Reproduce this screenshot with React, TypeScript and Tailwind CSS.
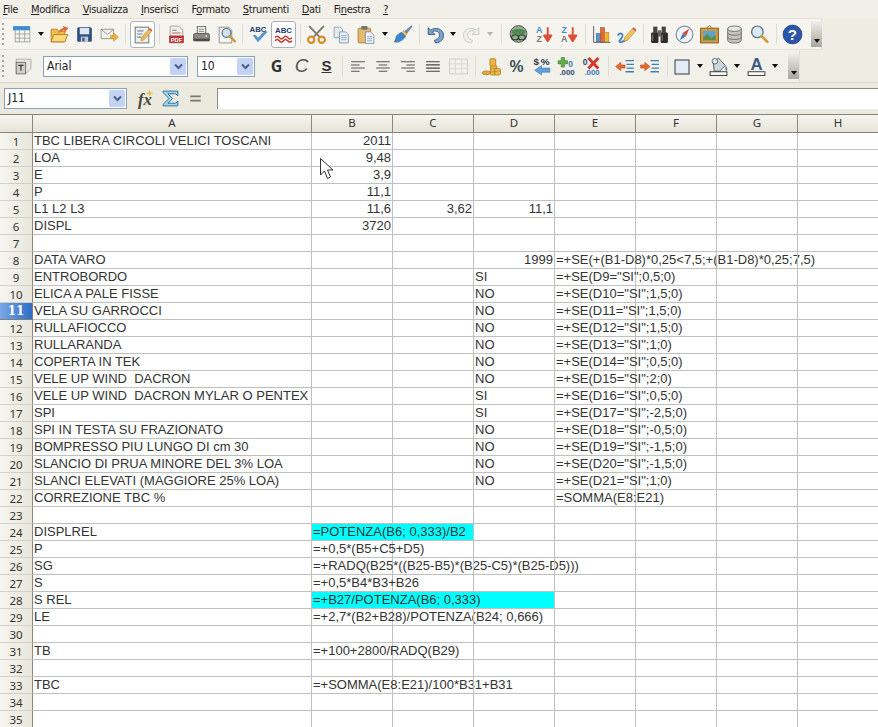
import { ReactNode } from "react";

type IconProps = { children: ReactNode };

// 20x20 canvas for all toolbar drawings
function Ico({ children }: IconProps) {
  return (
    <svg width="21" height="21" viewBox="0 0 20 20" className="block">
      {children}
    </svg>
  );
}

function Btn({ className = "w-[25px]", children }: { className?: string; children: ReactNode }) {
  return <div className={`${className} shrink-0 flex items-center justify-center`}>{children}</div>;
}

function Sep({ className }: { className: string }) {
  return (
    <div className={`${className} shrink-0 flex items-center justify-center`}>
      <div className="w-px h-[20px] bg-[#dedcd2]" />
    </div>
  );
}

function Drop({ className, grey }: { className: string; grey?: boolean }) {
  return (
    <div className={`${className} shrink-0 flex items-center justify-center`}>
      <div
        className={`w-0 h-0 border-x-[3.5px] border-x-transparent border-t-[4px] ${grey ? "border-t-[#b5b5b0]" : "border-t-[#111]"}`}
      />
    </div>
  );
}

function Grip() {
  return (
    <div className="w-[9.5px] shrink-0 flex flex-col gap-[3px] items-start pl-[2px]">
      {[0, 1, 2, 3, 4].map((i) => (
        <div key={i} className="w-[2px] h-[2px] bg-[#a8a69a]" />
      ))}
    </div>
  );
}

function More() {
  return (
    <div className="w-[11px] h-[26px] shrink-0 bg-gradient-to-b from-[#efeee8] to-[#a9a89f] flex items-end justify-center pb-[4px]">
      <div className="w-0 h-0 border-x-[3.5px] border-x-transparent border-t-[4px] border-t-[#111]" />
    </div>
  );
}

function Combo({ className, label }: { className: string; label: string }) {
  return (
    <div className={`${className} h-[21px] shrink-0 bg-white border border-[#8ba0bc] flex items-center justify-between pl-[3px] pr-[1px]`}>
      <span className="text-[12px] text-[#222] font-['DejaVu_Sans',sans-serif] font-stretch-condensed leading-none">{label}</span>
      <div className="w-[16px] h-[17px] rounded-[2px] bg-[#c4d3f3] flex items-center justify-center">
        <svg width="9" height="7" viewBox="0 0 9 7">
          <path d="M1 1.5 L4.5 5 L8 1.5" fill="none" stroke="#4a5f8c" strokeWidth="2" />
        </svg>
      </div>
    </div>
  );
}

const icons = {
  table: (
    <Ico>
      <rect x="3" y="3" width="14" height="14" fill="#f4f4f0" stroke="#9a9a94" strokeWidth="0.8" />
      <rect x="1" y="2" width="16" height="4" fill="#3f8ed0" />
      <path d="M7 6V17M12 6V17M3 9.5H17M3 13.5H17" stroke="#a0a09a" strokeWidth="0.8" />
    </Ico>
  ),
  folder: (
    <Ico>
      <path d="M2 5H8L9 7H15V17H2Z" fill="#f2bc4a" stroke="#b9832a" strokeWidth="0.9" />
      <path d="M2 17L4.5 10H18L15 17Z" fill="#fbd77c" stroke="#b9832a" strokeWidth="0.9" />
      <path d="M9 9C10 5 12 4 14 4L13 2L18.5 3.5L15 8L14.6 6C13 6 11 7 9 9Z" fill="#e8622c" />
    </Ico>
  ),
  save: (
    <Ico>
      <rect x="3" y="3" width="14" height="14" rx="1.5" fill="#2f4f7f" />
      <rect x="5.5" y="3.8" width="9" height="6" fill="#dfe6ef" />
      <rect x="6.5" y="12" width="7" height="5" fill="#c4ccd6" />
      <rect x="8" y="13" width="2" height="3.5" fill="#2f4f7f" />
    </Ico>
  ),
  mail: (
    <Ico>
      <rect x="2" y="5" width="12" height="9" fill="#f2f2ee" stroke="#8e8e88" strokeWidth="0.8" />
      <path d="M2 5L8 10L14 5" fill="none" stroke="#8e8e88" strokeWidth="0.8" />
      <path d="M11 11H14V8.5L18.5 12.5L14 16.5V14H11Z" fill="#efb23e" stroke="#b9832a" strokeWidth="0.5" />
    </Ico>
  ),
  edit: (
    <Ico>
      <rect x="3" y="3" width="13" height="15" fill="#eef0ee" stroke="#6d6d68" strokeWidth="0.9" />
      <path d="M5 6.5H11M5 9.5H10M5 12.5H9" stroke="#6c8aa8" strokeWidth="1.1" />
      <path d="M9 13L16 5L18.5 7L11.5 15L8.5 16Z" fill="#eebc50" stroke="#a8762a" strokeWidth="0.5" />
      <path d="M16 5L17 3.8L19.5 5.8L18.5 7Z" fill="#d8554a" />
    </Ico>
  ),
  pdf: (
    <Ico>
      <path d="M4 2H12L16 6V18H4Z" fill="#eeeeea" stroke="#9a9a94" strokeWidth="0.8" />
      <path d="M6 6H10M6 8.5H14" stroke="#b07070" strokeWidth="1" />
      <rect x="3" y="11" width="14" height="7" fill="#bb3333" />
      <text x="10" y="16.8" textAnchor="middle" fontSize="5.5" fontWeight="700" fill="#fff" fontFamily="Liberation Sans">PDF</text>
    </Ico>
  ),
  print: (
    <Ico>
      <rect x="6" y="2.5" width="8" height="7" fill="#f4f4f0" stroke="#66665f" strokeWidth="0.9" />
      <path d="M7.5 5H12.5M7.5 7H12.5" stroke="#77776f" strokeWidth="0.8" />
      <path d="M2.5 10.5Q2.5 9 4 9H16Q17.5 9 17.5 10.5V15.5H2.5Z" fill="#8a8a84" stroke="#4c4c47" strokeWidth="0.8" />
      <rect x="2.5" y="14" width="15" height="2.5" fill="#4c4c47" />
      <circle cx="14.5" cy="11.5" r="0.8" fill="#dfe7d0" />
    </Ico>
  ),
  preview: (
    <Ico>
      <path d="M3 3H12L15 6V18H3Z" fill="#f6f6f2" stroke="#84847e" strokeWidth="0.8" />
      <circle cx="10" cy="8.5" r="4.2" fill="#cfe3f2" stroke="#5c6c7c" strokeWidth="1.1" />
      <path d="M13 11.5L18 16.5" stroke="#c99a3c" strokeWidth="2.2" strokeLinecap="round" />
    </Ico>
  ),
  abcCheck: (
    <Ico>
      <text x="9.5" y="8" textAnchor="middle" fontSize="7.5" fontWeight="700" fill="#26406e" fontFamily="Liberation Sans">ABC</text>
      <path d="M5 11L9.5 17L18 7.5L16 7L9.5 13.5L7 10.5Z" fill="#4f9bd8" stroke="#2d6aa5" strokeWidth="0.4" />
    </Ico>
  ),
  abcWave: (
    <Ico>
      <text x="10" y="9" textAnchor="middle" fontSize="7.5" fontWeight="700" fill="#26406e" fontFamily="Liberation Sans">ABC</text>
      <path d="M2 13Q4 10.5 6 13T10 13T14 13T18 13" fill="none" stroke="#cc2b2b" strokeWidth="1.4" />
      <path d="M2 16Q4 13.5 6 16T10 16T14 16T18 16" fill="none" stroke="#cc2b2b" strokeWidth="1.4" />
    </Ico>
  ),
  scissors: (
    <Ico>
      <path d="M3 2L13 12.5M17 2L7 12.5" stroke="#7a7a74" strokeWidth="1.8" />
      <circle cx="5" cy="15" r="3" fill="none" stroke="#d98a26" strokeWidth="2" />
      <circle cx="15" cy="15" r="3" fill="none" stroke="#d98a26" strokeWidth="2" />
    </Ico>
  ),
  copy: (
    <Ico>
      <path d="M3 3H9L11 5V13H3Z" fill="#e6ecf4" stroke="#8a96a8" strokeWidth="0.8" />
      <path d="M8 7.5H14L16.5 10V18H8Z" fill="#eef3f8" stroke="#7d8ca0" strokeWidth="0.8" />
      <path d="M9.5 11H15M9.5 13H15M9.5 15H15" stroke="#7ba0c4" strokeWidth="0.8" />
    </Ico>
  ),
  paste: (
    <Ico>
      <rect x="2" y="4" width="12" height="14" rx="1" fill="#e7b96a" stroke="#a77c34" strokeWidth="0.8" />
      <rect x="5" y="2" width="6" height="3.5" rx="1" fill="#77776f" />
      <path d="M9 7.5H14L17 10.5V18.5H9Z" fill="#f2f6fa" stroke="#7d8ca0" strokeWidth="0.8" />
      <path d="M10.5 12H15.5M10.5 14H15.5M10.5 16H15.5" stroke="#7ba0c4" strokeWidth="0.8" />
    </Ico>
  ),
  brush: (
    <Ico>
      <path d="M19 1.5L12 7L14 9L18.5 3Z" fill="#6f93bb" stroke="#44607f" strokeWidth="0.5" />
      <path d="M11.5 6.5L14.5 9.5L12 11.5L9 8.5Z" fill="#e6c25a" stroke="#a5842c" strokeWidth="0.5" />
      <path d="M9 8L13 12C10 16 6 18 2 17C3.5 15.5 4 13 4 12C5 10 7 9 9 8Z" fill="#3f86d0" stroke="#28598f" strokeWidth="0.6" />
    </Ico>
  ),
  undo: (
    <Ico>
      <path d="M3 3.5V10H9.5L7 7.5C9 6 12.5 6.5 13.5 9C14.5 12 12.5 15 9 15.5L10 18C15 18 18.5 14 17.5 9.5C16.5 4.5 10 2.5 5.5 5.8Z" fill="#7ea3cc" stroke="#3d5d85" strokeWidth="0.9" />
    </Ico>
  ),
  redo: (
    <Ico>
      <path d="M17 3.5V10H10.5L13 7.5C11 6 7.5 6.5 6.5 9C5.5 12 7.5 15 11 15.5L10 18C5 18 1.5 14 2.5 9.5C3.5 4.5 10 2.5 14.5 5.8Z" fill="#f0f0ec" stroke="#c9c9c3" strokeWidth="0.9" />
    </Ico>
  ),
  nav: (
    <Ico>
      <circle cx="10" cy="9.5" r="8" fill="#8fb28c" stroke="#555" strokeWidth="0.9" />
      <path d="M3 7C6 4 13 3.5 17 7L15 10H5Z" fill="#4e8a50" />
      <rect x="3.5" y="10.5" width="6.5" height="4.5" rx="2.2" fill="none" stroke="#333" strokeWidth="1.1" />
      <rect x="10" y="10.5" width="6.5" height="4.5" rx="2.2" fill="none" stroke="#333" strokeWidth="1.1" />
    </Ico>
  ),
  az: (
    <Ico>
      <text x="6" y="8.5" textAnchor="middle" fontSize="8.5" fontWeight="700" fill="#3d8ccf" fontFamily="Liberation Sans">A</text>
      <text x="6" y="17.5" textAnchor="middle" fontSize="8.5" fontWeight="700" fill="#777" fontFamily="Liberation Sans">Z</text>
      <path d="M14 3V13M10.5 11L14 16.5L17.5 11Z" fill="#dd4d33" stroke="#dd4d33" strokeWidth="1.8" strokeLinejoin="round" />
    </Ico>
  ),
  za: (
    <Ico>
      <text x="6" y="8.5" textAnchor="middle" fontSize="8.5" fontWeight="700" fill="#3d8ccf" fontFamily="Liberation Sans">Z</text>
      <text x="6" y="17.5" textAnchor="middle" fontSize="8.5" fontWeight="700" fill="#777" fontFamily="Liberation Sans">A</text>
      <path d="M14 3V13M10.5 11L14 16.5L17.5 11Z" fill="#dd4d33" stroke="#dd4d33" strokeWidth="1.8" strokeLinejoin="round" />
    </Ico>
  ),
  chart: (
    <Ico>
      <path d="M2.5 2V17.5H18.5" fill="none" stroke="#556" strokeWidth="0.9" />
      <rect x="5" y="9" width="4" height="8" fill="#5a93cc" stroke="#36628f" strokeWidth="0.5" />
      <rect x="9" y="3.5" width="4" height="13.5" fill="#e06a3a" stroke="#a8481f" strokeWidth="0.5" />
      <rect x="13" y="8" width="4" height="9" fill="#f0b53e" stroke="#b27f1c" strokeWidth="0.5" />
    </Ico>
  ),
  draw: (
    <Ico>
      <path d="M1.5 11C4 8 7 8.5 6 12C5 15 2 16 3.5 17C6 18 9 15.5 11 14" fill="none" stroke="#4a7fbf" strokeWidth="1.7" />
      <path d="M8 13L15.5 4.5L18.5 7L11 15.5L7.5 16.5Z" fill="#efc558" stroke="#a8762a" strokeWidth="0.5" />
      <path d="M15.5 4.5L16.7 3L19.5 5.5L18.5 7Z" fill="#d8554a" />
    </Ico>
  ),
  binoc: (
    <Ico>
      <rect x="2" y="8" width="7" height="10" rx="1.2" fill="#2c2c2a" />
      <rect x="11" y="8" width="7" height="10" rx="1.2" fill="#2c2c2a" />
      <rect x="4" y="2.5" width="4" height="6" fill="#44443f" />
      <rect x="12" y="2.5" width="4" height="6" fill="#44443f" />
      <rect x="8.5" y="6" width="3" height="6" fill="#66665f" />
      <path d="M3.5 10V16" stroke="#8a8a84" strokeWidth="0.9" />
      <path d="M12.5 10V16" stroke="#8a8a84" strokeWidth="0.9" />
    </Ico>
  ),
  compass: (
    <Ico>
      <circle cx="10" cy="10" r="8" fill="#f0f2f4" stroke="#7d8ca0" strokeWidth="1.1" />
      <path d="M14.5 4.5L8.5 8.5L11.5 11.5Z" fill="#d9432f" />
      <path d="M5.5 15.5L8.5 8.5L11.5 11.5Z" fill="#3f78c0" />
    </Ico>
  ),
  gallery: (
    <Ico>
      <path d="M7 4L10 1.5L13 4" fill="none" stroke="#8a6a2a" strokeWidth="0.8" />
      <rect x="1.5" y="4" width="17" height="14" fill="#d99a3c" stroke="#7f5a1c" strokeWidth="0.9" />
      <rect x="4" y="6.5" width="12" height="9" fill="#5ea2c9" />
      <path d="M4 15.5V12.5L8 9.5L12 13L16 11V15.5Z" fill="#5c8f45" />
    </Ico>
  ),
  db: (
    <Ico>
      <path d="M3.5 4.5V15.5C3.5 19 16.5 19 16.5 15.5V4.5Z" fill="#c4c4be" stroke="#72726c" strokeWidth="0.9" />
      <ellipse cx="10" cy="4.5" rx="6.5" ry="2.6" fill="#e6e6e0" stroke="#72726c" strokeWidth="0.9" />
      <path d="M3.5 8.5C3.5 11.5 16.5 11.5 16.5 8.5M3.5 12.5C3.5 15.5 16.5 15.5 16.5 12.5" fill="none" stroke="#72726c" strokeWidth="0.9" />
    </Ico>
  ),
  search: (
    <Ico>
      <circle cx="8" cy="7.5" r="5.5" fill="#d9e9f5" stroke="#66788a" strokeWidth="1.3" />
      <path d="M12 11.5L17.5 17" stroke="#cfa03e" strokeWidth="2.6" strokeLinecap="round" />
    </Ico>
  ),
  help: (
    <Ico>
      <circle cx="10" cy="10" r="9" fill="#2b55a8" stroke="#1d3a78" strokeWidth="0.7" />
      <text x="10" y="15.3" textAnchor="middle" fontSize="14.5" fontWeight="700" fill="#fff" fontFamily="Liberation Sans">?</text>
    </Ico>
  ),
  styles: (
    <Ico>
      <path d="M4 3H18V12L14 16H4Z" fill="#e9e9e3" stroke="#a3a39c" strokeWidth="0.8" />
      <rect x="4" y="6" width="9" height="11" fill="#cfcfc8" stroke="#66665f" strokeWidth="0.8" />
      <path d="M6 9H11M8.5 9V14" stroke="#333" strokeWidth="1.1" />
    </Ico>
  ),
  alignL: (
    <Ico>
      <path d="M3 5.5H16M3 8.5H11M3 11.5H16M3 14.5H11" stroke="#555" strokeWidth="1" />
    </Ico>
  ),
  alignC: (
    <Ico>
      <path d="M3 5.5H16M5.5 8.5H13.5M3 11.5H16M5.5 14.5H13.5" stroke="#555" strokeWidth="1" />
    </Ico>
  ),
  alignR: (
    <Ico>
      <path d="M3 5.5H16M8 8.5H16M3 11.5H16M8 14.5H16" stroke="#555" strokeWidth="1" />
    </Ico>
  ),
  alignJ: (
    <Ico>
      <path d="M3 5.5H16M3 8.5H16M3 11.5H16M3 14.5H16" stroke="#444" strokeWidth="1.1" />
    </Ico>
  ),
  merge: (
    <Ico>
      <rect x="1.5" y="3" width="17" height="14" fill="#f2f1ea" stroke="#cfcec6" strokeWidth="0.9" />
      <path d="M1.5 7.5H18.5M1.5 12H18.5M7 3V17M13 3V17" stroke="#d6d5cd" strokeWidth="0.8" />
    </Ico>
  ),
  coins: (
    <Ico>
      <ellipse cx="5" cy="16" rx="4" ry="1.8" fill="#e9a93a" stroke="#a8741c" strokeWidth="0.7" />
      <rect x="9" y="9" width="6" height="9" rx="1" fill="#eeb545" stroke="#a8741c" strokeWidth="0.7" />
      <rect x="13" y="12" width="5.5" height="6" rx="1" fill="#f2c052" stroke="#a8741c" strokeWidth="0.7" />
      <rect x="8.5" y="2.5" width="5.5" height="7" rx="1" fill="#eeb545" stroke="#a8741c" strokeWidth="0.7" />
      <path d="M9 12H15M9 15H15M13.5 14.5H18.5" stroke="#a8741c" strokeWidth="0.5" />
    </Ico>
  ),
  percent: (
    <Ico>
      <text x="10" y="15.5" textAnchor="middle" fontSize="15" fontWeight="700" fill="#3c4a58" fontFamily="Liberation Sans">%</text>
    </Ico>
  ),
  currency: (
    <Ico>
      <text x="5" y="8.5" textAnchor="middle" fontSize="9.5" fontWeight="700" fill="#2c3a48" fontFamily="Liberation Sans">$</text>
      <text x="13.5" y="8.5" textAnchor="middle" fontSize="9.5" fontWeight="700" fill="#2c3a48" fontFamily="Liberation Sans">%</text>
      <path d="M18 11.5H10V9L3.5 13.5L10 18V15.5H18Z" fill="#5fa0dc" stroke="#3570a8" strokeWidth="0.5" />
    </Ico>
  ),
  addDec: (
    <Ico>
      <path d="M5 1.5H8V4.5H11V7.5H8V10.5H5V7.5H2V4.5H5Z" fill="#62b04a" stroke="#3d7d2c" strokeWidth="0.6" />
      <text x="14" y="10" textAnchor="middle" fontSize="8" fontWeight="700" fill="#3f78c0" fontFamily="Liberation Sans">0</text>
      <text x="10.5" y="18" textAnchor="middle" fontSize="7.5" fontWeight="700" fill="#2f4a70" fontFamily="Liberation Sans">.000</text>
    </Ico>
  ),
  delDec: (
    <Ico>
      <text x="4" y="9" textAnchor="middle" fontSize="8" fontWeight="700" fill="#2f4a70" fontFamily="Liberation Sans">0</text>
      <text x="10.5" y="18" textAnchor="middle" fontSize="7.5" fontWeight="700" fill="#3f78c0" fontFamily="Liberation Sans">.000</text>
      <path d="M7 2L16.5 12M16.5 2L7 12" stroke="#d8352b" strokeWidth="2.8" />
    </Ico>
  ),
  indentL: (
    <Ico>
      <path d="M11 4.5H19M12 8H19M12 11.5H19M11 15H19" stroke="#3e7cb8" strokeWidth="1.2" />
      <path d="M10.5 8.5H6.5V6L1.5 10L6.5 14V11.5H10.5Z" fill="#e96a2f" stroke="#b3481a" strokeWidth="0.5" />
    </Ico>
  ),
  indentR: (
    <Ico>
      <path d="M11 4.5H19M12 8H19M12 11.5H19M11 15H19" stroke="#3e7cb8" strokeWidth="1.2" />
      <path d="M1.5 8.5H5.5V6L10.5 10L5.5 14V11.5H1.5Z" fill="#e96a2f" stroke="#b3481a" strokeWidth="0.5" />
    </Ico>
  ),
  border: (
    <Ico>
      <rect x="3" y="3.5" width="14" height="14" fill="#e3ebf6" stroke="#2f3a4c" strokeWidth="1" />
    </Ico>
  ),
  bg: (
    <Ico>
      <path d="M5 6L10 2L16.5 9L11 14.5H6Z" fill="#cfd7de" stroke="#4e5a66" strokeWidth="0.9" />
      <circle cx="6.5" cy="5" r="2.6" fill="#e8ecef" stroke="#4e5a66" strokeWidth="0.8" />
      <path d="M17 9C19 12 18.5 14 17.5 14S16 12 17 9Z" fill="#4a7fbf" />
      <rect x="2" y="15" width="16" height="3.5" fill="#fbfbf8" stroke="#333" strokeWidth="0.9" />
    </Ico>
  ),
  fontColor: (
    <Ico>
      <text x="10" y="13.5" textAnchor="middle" fontSize="16" fontWeight="700" fill="#3d5a7d" fontFamily="Liberation Sans">A</text>
      <rect x="2" y="15" width="16" height="3.5" fill="#fbfbf8" stroke="#333" strokeWidth="0.9" />
    </Ico>
  ),
  fx: (
    <Ico>
      <text x="9.5" y="16" textAnchor="middle" fontSize="16" fontStyle="italic" fontWeight="700" fill="#4a4a3c" fontFamily="Liberation Serif">fx</text>
      <path d="M14 1.5L15 4L17.5 5L15 6L14 8.5L13 6L10.5 5L13 4Z" fill="#e8c340" />
    </Ico>
  ),
  sigma: (
    <Ico>
      <path d="M3 3H17V7.5L15 5.5H7.5L12 10L7.5 14.5H15L17 12.5V17H3V15.5L8.5 10L3 4.5Z" fill="#a4d6ee" stroke="#22709c" strokeWidth="0.9" />
    </Ico>
  ),
  equal: (
    <Ico>
      <path d="M5 8H15M5 12H15" stroke="#77776f" strokeWidth="1.6" />
    </Ico>
  ),
};

const menu: [string, string, string][] = [
  ["", "F", "ile"],
  ["", "M", "odifica"],
  ["", "V", "isualizza"],
  ["", "I", "nserisci"],
  ["F", "o", "rmato"],
  ["", "S", "trumenti"],
  ["", "D", "ati"],
  ["Fi", "n", "estra"],
  ["", "?", ""],
];

type Row = { a?: string; b?: string; c?: string; d?: string; dr?: string; e?: string; span?: number };

const rows: Row[] = [
  { a: "TBC LIBERA CIRCOLI VELICI TOSCANI", b: "2011" },
  { a: "LOA", b: "9,48" },
  { a: "E", b: "3,9" },
  { a: "P", b: "11,1" },
  { a: "L1 L2 L3", b: "11,6", c: "3,62", dr: "11,1" },
  { a: "DISPL", b: "3720" },
  {},
  { a: "DATA VARO", dr: "1999", e: '=+SE(+(B1-D8)*0,25<7,5;+(B1-D8)*0,25;7,5)' },
  { a: "ENTROBORDO", d: "SI", e: '=+SE(D9="SI";0,5;0)' },
  { a: "ELICA A PALE FISSE", d: "NO", e: '=+SE(D10="SI";1,5;0)' },
  { a: "VELA SU GARROCCI", d: "NO", e: '=+SE(D11="SI";1,5;0)' },
  { a: "RULLAFIOCCO", d: "NO", e: '=+SE(D12="SI";1,5;0)' },
  { a: "RULLARANDA", d: "NO", e: '=+SE(D13="SI";1;0)' },
  { a: "COPERTA IN TEK", d: "NO", e: '=+SE(D14="SI";0,5;0)' },
  { a: "VELE UP WIND  DACRON", d: "NO", e: '=+SE(D15="SI";2;0)' },
  { a: "VELE UP WIND  DACRON MYLAR O PENTEX", d: "SI", e: '=+SE(D16="SI";0,5;0)' },
  { a: "SPI", d: "SI", e: '=+SE(D17="SI";-2,5;0)' },
  { a: "SPI IN TESTA SU FRAZIONATO", d: "NO", e: '=+SE(D18="SI";-0,5;0)' },
  { a: "BOMPRESSO PIU LUNGO DI cm 30", d: "NO", e: '=+SE(D19="SI";-1,5;0)' },
  { a: "SLANCIO DI PRUA MINORE DEL 3% LOA", d: "NO", e: '=+SE(D20="SI";-1,5;0)' },
  { a: "SLANCI ELEVATI (MAGGIORE 25% LOA)", d: "NO", e: '=+SE(D21="SI";1;0)' },
  { a: "CORREZIONE TBC %", e: "=SOMMA(E8:E21)" },
  {},
  { a: "DISPLREL", b: "=POTENZA(B6; 0,333)/B2", span: 2 },
  { a: "P", b: "=+0,5*(B5+C5+D5)" },
  { a: "SG", b: "=+RADQ(B25*((B25-B5)*(B25-C5)*(B25-D5)))" },
  { a: "S", b: "=+0,5*B4*B3+B26" },
  { a: "S REL", b: "=+B27/POTENZA(B6; 0,333)", span: 3 },
  { a: "LE", b: "=+2,7*(B2+B28)/POTENZA(B24; 0,666)" },
  {},
  { a: "TB", b: "=+100+2800/RADQ(B29)" },
  {},
  { a: "TBC", b: "=+SOMMA(E8:E21)/100*B31+B31" },
  {},
  {},
];

const cols = ["A", "B", "C", "D", "E", "F", "G", "H"];
const cellBase = "h-[17px] border-r border-b border-[#c0c0c0] whitespace-pre leading-[16px] min-w-0";

function isNumeric(v: string) {
  return /^[0-9,]+$/.test(v);
}

function SheetRow({ row, n }: { row: Row; n: number }) {
  const active = n === 11;
  const bText = row.b ?? "";
  return (
    <div className="grid grid-cols-[33px_279px_81px_81px_81px_81px_81px_81px_81px] h-[17px]">
      <div
        className={
          active
            ? "h-[17px] border-r border-b border-[#7f7f78] bg-gradient-to-r from-[#79a6e6] to-[#2d6ec6] text-white font-bold text-center text-[12px] leading-[17px] font-['DejaVu_Serif',serif]"
            : "h-[17px] border-r border-b border-r-[#8c8a80] border-b-[#d3d1c5] bg-gradient-to-r from-[#f6f5ef] to-[#e9e7dc] text-[#333] text-center text-[11.5px] leading-[17px] font-['Noto_Sans',sans-serif]"
        }
      >
        {n}
      </div>
      <div className={`${cellBase} pl-px`}>{row.a}</div>
      {row.span === 2 && <div className={`${cellBase} col-span-2 pl-px bg-[#00ffff]`}>{bText}</div>}
      {row.span === 3 && <div className={`${cellBase} col-span-3 pl-px bg-[#00ffff]`}>{bText}</div>}
      {!row.span && (
        <div className={`${cellBase} ${isNumeric(bText) ? "pr-[1px] text-right" : "pl-px"}`}>{bText}</div>
      )}
      {!row.span && <div className={`${cellBase} pr-[1px] text-right`}>{row.c}</div>}
      {row.span !== 3 && (
        <div className={`${cellBase} ${row.dr ? "pr-[1px] text-right" : "pl-px"}`}>{row.dr ?? row.d}</div>
      )}
      <div className={`${cellBase} pl-px`}>{row.e}</div>
      <div className={cellBase} />
      <div className={cellBase} />
      <div className={cellBase} />
    </div>
  );
}

export default function App() {
  return (
    <div className="relative w-[878px] h-[727px] overflow-hidden bg-[#efede3] font-['Liberation_Sans',sans-serif] text-[13px] text-[#222]">
      {/* Menu */}
      <div className="h-[18px] flex items-center gap-[13px] pl-[3px] bg-[#f1efe7] text-[#222] text-[11px] tracking-[-0.35px] font-['DejaVu_Sans',sans-serif] font-stretch-condensed">
        {menu.map(([pre, key, rest]) => (
          <span key={key + rest} className="leading-[15px]">
            {pre}
            <span className="underline">{key}</span>
            {rest}
          </span>
        ))}
      </div>

      {/* Standard toolbar */}
      <div className="h-[32px] flex">
        <div className="w-[822px] flex items-center bg-[#f5f4ef] border-t border-[#e3e1d6] border-b border-r">
          <Grip />
          <Btn>{icons.table}</Btn>
          <Drop className="w-[12px]" />
          <Btn>{icons.folder}</Btn>
          <Btn>{icons.save}</Btn>
          <Btn>{icons.mail}</Btn>
          <Sep className="w-[8.5px]" />
          <div className="w-[25px] h-[27px] shrink-0 flex items-center justify-center bg-white border border-[#a9b4c0] rounded-[3px]">
            {icons.edit}
          </div>
          <Sep className="w-[9px]" />
          <Btn>{icons.pdf}</Btn>
          <Btn>{icons.print}</Btn>
          <Btn>{icons.preview}</Btn>
          <Sep className="w-[7px]" />
          <Btn>{icons.abcCheck}</Btn>
          <div className="w-[25px] h-[27px] shrink-0 flex items-center justify-center bg-white border border-[#a9b4c0] rounded-[3px]">
            {icons.abcWave}
          </div>
          <Sep className="w-[8px]" />
          <Btn>{icons.scissors}</Btn>
          <Btn>{icons.copy}</Btn>
          <Btn>{icons.paste}</Btn>
          <Drop className="w-[11px]" />
          <Btn>{icons.brush}</Btn>
          <Sep className="w-[8px]" />
          <Btn className="w-[24px]">{icons.undo}</Btn>
          <Drop className="w-[12px]" />
          <Btn>{icons.redo}</Btn>
          <Drop className="w-[12px]" grey />
          <Sep className="w-[10px]" />
          <Btn>{icons.nav}</Btn>
          <Btn>{icons.az}</Btn>
          <Btn>{icons.za}</Btn>
          <Sep className="w-[8px]" />
          <Btn>{icons.chart}</Btn>
          <Btn>{icons.draw}</Btn>
          <Sep className="w-[8px]" />
          <Btn>{icons.binoc}</Btn>
          <Btn>{icons.compass}</Btn>
          <Btn>{icons.gallery}</Btn>
          <Btn>{icons.db}</Btn>
          <Btn>{icons.search}</Btn>
          <Sep className="w-[8px]" />
          <Btn>{icons.help}</Btn>
          <div className="w-[6px] shrink-0" />
          <More />
        </div>
      </div>

      {/* Formatting toolbar */}
      <div className="h-[33px] flex border-b border-[#d8d6ca]">
        <div className="w-[800px] flex items-center bg-[#f1f0e9] border-r border-[#e3e1d6]">
          <Grip />
          <Btn>{icons.styles}</Btn>
          <div className="w-[8.5px] shrink-0" />
          <Combo className="w-[145px]" label="Arial" />
          <div className="w-[9px] shrink-0" />
          <Combo className="w-[58px]" label="10" />
          <div className="w-[9px] shrink-0" />
          <Btn><span className="text-[16px] font-bold text-[#333] font-['Noto_Sans',sans-serif]">G</span></Btn>
          <Btn><span className="text-[19px] italic text-[#555]">C</span></Btn>
          <Btn><span className="text-[15px] font-bold text-[#333] underline">S</span></Btn>
          <Sep className="w-[7px]" />
          <Btn>{icons.alignL}</Btn>
          <Btn>{icons.alignC}</Btn>
          <Btn>{icons.alignR}</Btn>
          <Btn>{icons.alignJ}</Btn>
          <Btn>{icons.merge}</Btn>
          <Sep className="w-[8px]" />
          <Btn>{icons.coins}</Btn>
          <Btn>{icons.percent}</Btn>
          <Btn>{icons.currency}</Btn>
          <Btn>{icons.addDec}</Btn>
          <Btn>{icons.delDec}</Btn>
          <Sep className="w-[8px]" />
          <Btn>{icons.indentL}</Btn>
          <Btn>{icons.indentR}</Btn>
          <Sep className="w-[10px]" />
          <Btn className="w-[20px]">{icons.border}</Btn>
          <Drop className="w-[15px]" />
          <Btn className="w-[23px]">{icons.bg}</Btn>
          <Drop className="w-[14px]" />
          <Btn className="w-[24px]">{icons.fontColor}</Btn>
          <Drop className="w-[13px]" />
          <div className="w-[7px] shrink-0" />
          <More />
        </div>
      </div>

      {/* Formula bar */}
      <div className="h-[32px] flex items-center pl-[4px] pb-[2px] bg-[#ece9df]">
        <Combo className="w-[123px]" label="J11" />
        <div className="w-[6px] shrink-0" />
        <Btn>{icons.fx}</Btn>
        <Btn>{icons.sigma}</Btn>
        <Btn>{icons.equal}</Btn>
        <div className="w-[9px] shrink-0" />
        <div className="flex-1 h-[21px] bg-white border-l border-t border-[#8d8b82]" />
      </div>

      {/* Sheet */}
      <div className="bg-white text-[#333]">
        <div className="grid grid-cols-[33px_279px_81px_81px_81px_81px_81px_81px_81px] h-[17px] border-t border-b border-[#85837a] box-content -mt-px">
          <div className="border-r border-[#8c8a80] bg-gradient-to-b from-[#f6f5ef] to-[#e6e4d8]" />
          {cols.map((c) => (
            <div
              key={c}
              className="border-r border-[#8c8a80] bg-gradient-to-b from-[#f6f5ef] to-[#e6e4d8] text-center text-[#333] text-[11.5px] leading-[16px] font-['Noto_Sans',sans-serif]"
            >
              {c}
            </div>
          ))}
        </div>
        {rows.map((row, i) => (
          <SheetRow key={i} row={row} n={i + 1} />
        ))}
      </div>

      {/* Mouse pointer over the sheet */}
      <svg width="14" height="22" viewBox="0 0 14 22" className="absolute left-[320px] top-[158px]">
        <path d="M0.5 0.5V17L4.5 13L7.5 20.5L10.5 19L7.5 12H13Z" fill="#fff" stroke="#333" strokeWidth="1" />
      </svg>
    </div>
  );
}
